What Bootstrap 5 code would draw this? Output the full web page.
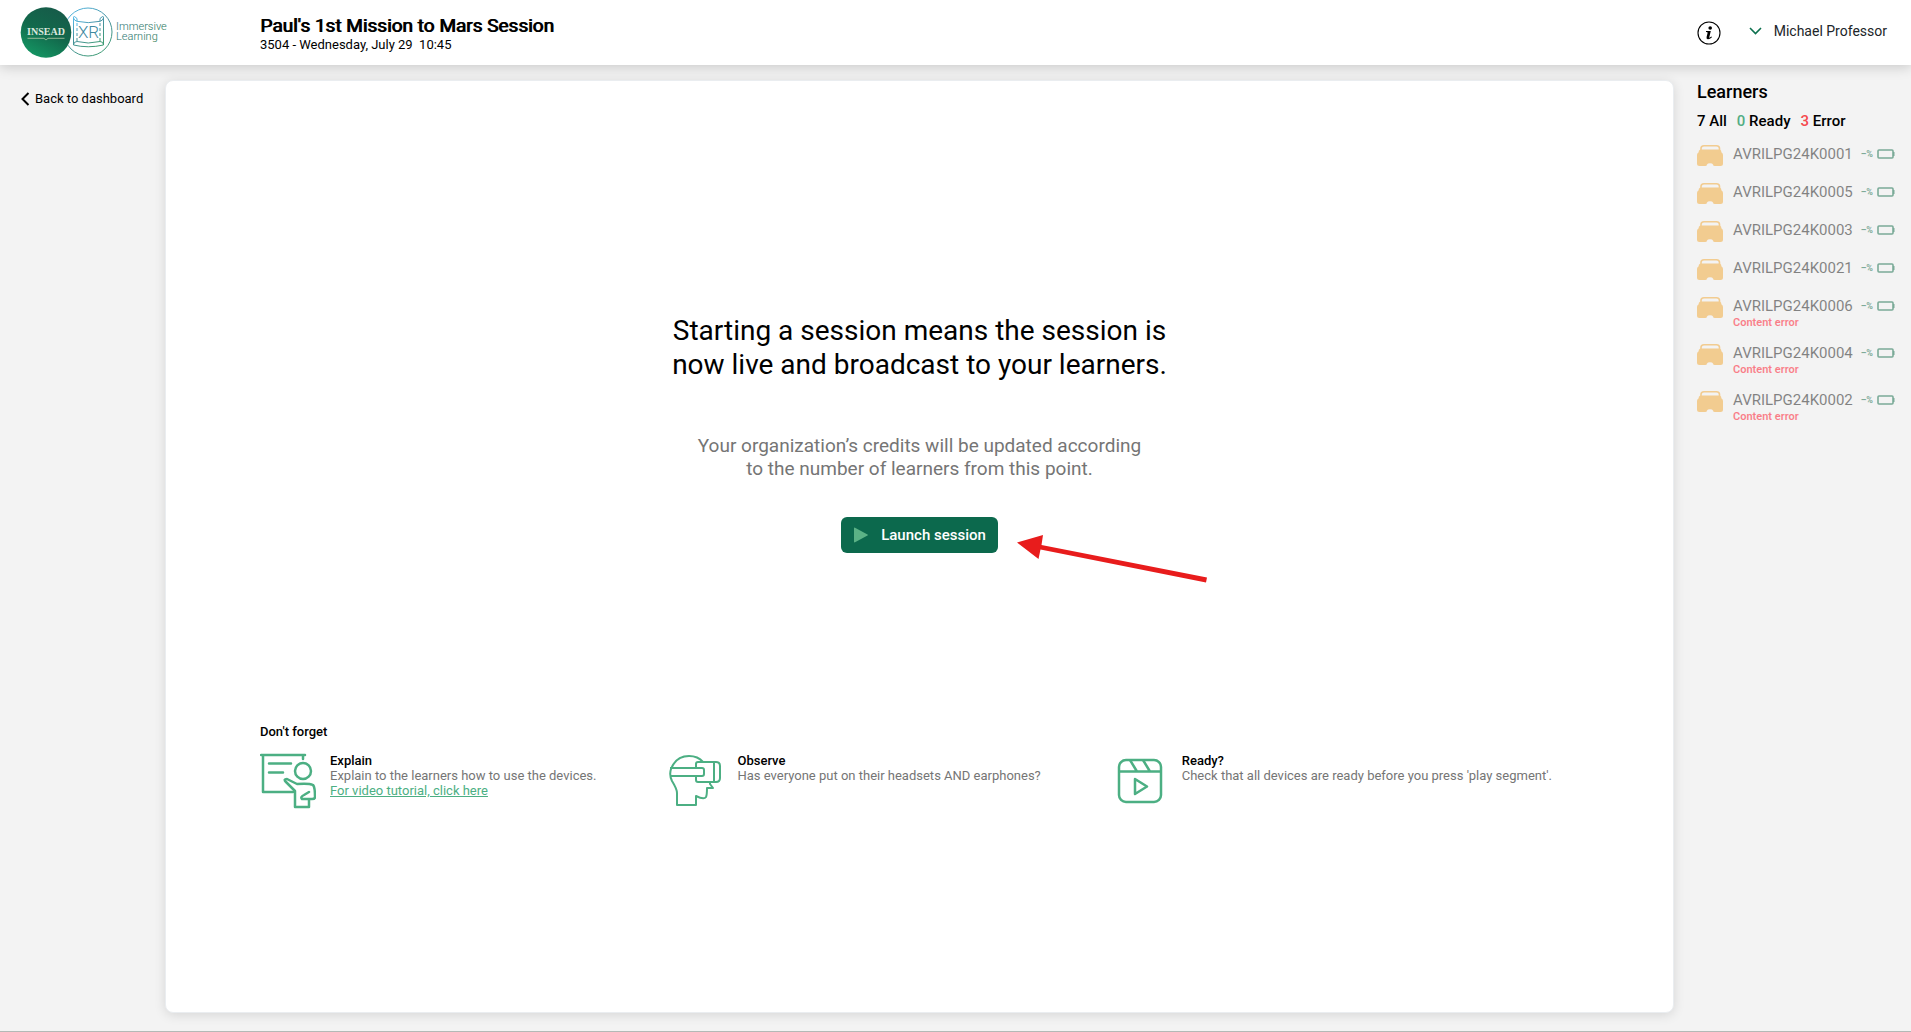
<!DOCTYPE html>
<html lang="en">
<head>
<meta charset="utf-8">
<meta name="viewport" content="width=device-width, initial-scale=1">
<title>Mission to Mars Session</title>
<link href="https://cdn.jsdelivr.net/npm/bootstrap@5.3.0/dist/css/bootstrap.min.css" rel="stylesheet">
<style>
body { font-family: Roboto, "Liberation Sans", sans-serif; background: #f3f3f3; color: #000; font-size: 13px; line-height: 15px; border-bottom: 1px solid #b3b9b6; }
a { color: inherit; }
.app-header { height: 65px; background: #fff; box-shadow: 0 2px 12px rgba(0,0,0,.18); }
.brand-area { width: 260px; padding: 7px 0 0 20px; }
.session-title { font-size: 19px; line-height: 20px; font-weight: 400; text-shadow: 1px 0 #000; padding-top: 16px; }
.session-meta { white-space: pre; padding-top: 1px; }
.user-area { padding: 21px 24px 0 0; gap: 28px; }
.user-menu { font-size: 14px; line-height: 20px; gap: 12px; }
.side-nav { width: 165px; padding: 26px 0 0 20px; }
.stage { margin: 15px 0 18px; border: 1px solid #eaedf0; border-radius: 8px; background: #fff; box-shadow: 0 2px 12px rgba(0,0,0,.12); padding: 233px 0 0; }
.learners { width: 237px; padding: 17px 16px 0 23px; }
.headline { font-size: 28px; line-height: 34px; font-weight: 400; }
.credits { font-size: 19px; line-height: 23px; color: #757575; padding-top: 52px; }
.launch { width: 157px; height: 36px; border-radius: 6px; background: #0c694d; color: #fff; font-size: 15px; font-weight: 500; gap: 12px; padding: 0; margin-top: 37px; }
.launch:hover { background: #095640; color: #fff; }
.pointer { left: 100%; top: 54px; margin-left: 18px; }
.tips { padding: 171px 0 0 94px; }
.tip-row { gap: 71px; padding-top: 14px; }
.tip-icon { width: 70px; }
.tip-name { font-size: 13px; line-height: 15px; font-weight: 500; }
.muted { color: #757575; }
.tutorial { color: #4caf83; }
.learners-title { font-size: 18px; line-height: 20px; font-weight: 500; }
.tally { font-size: 15px; line-height: 18px; font-weight: 500; gap: 10px; padding-top: 10px; }
.ready-count { color: #52ad84; }
.error-count { color: #f5494d; }
.roster { padding-top: 15px; gap: 16px; }
.device { opacity: .5; min-height: 22px; }
.device-icon { width: 36px; }
.device-name { font-size: 15px; line-height: 18px; color: #111; }
.device-error { font-size: 11px; line-height: 10px; font-weight: 600; color: #ff0a1e; padding-top: 3px; }
.power { color: #04643f; font-size: 9px; line-height: 18px; gap: 4px; font-weight: 700; white-space: nowrap; }
svg { display: block; flex: none; }
</style>
<script src="https://cdn.jsdelivr.net/npm/bootstrap@5.3.0/dist/js/bootstrap.bundle.min.js" defer></script>
</head>
<body class="min-vh-100 d-flex flex-column">
<svg width="0" height="0" class="position-absolute" aria-hidden="true">
  <symbol id="headset" viewBox="0 0 26 21"><path d="M4 6V3.500Q4 .8 7 .8H19.500Q22.500 .8 22.500 3.500V6" fill="none" stroke="#f2a630" stroke-width="1.600"/><path d="M3.500 4.500H22.500Q24.500 5 24.500 7.500Q26 8 26 10V18.500Q26 21 23.500 21H18Q16 21 16 19.500Q15.500 18.300 13 18.300Q10.500 18.300 10 19.500Q10 21 8 21H2.500Q0 21 0 18.500V10Q0 8 1.500 7.500Q1.500 5 3.500 4.500Z" fill="#f2a630"/></symbol>
  <symbol id="battery" viewBox="0 0 18 10"><rect x="1" y="1" width="15" height="8" rx="1" fill="none" stroke="currentColor" stroke-width="1.600"/><path d="M16 3h1.500v4h-1.500z" fill="currentColor"/></symbol>
</svg>

<header class="app-header d-flex position-relative">
  <a class="brand-area text-decoration-none" href="#" aria-label="INSEAD XR Immersive Learning">
    <svg width="150" height="52" viewBox="0 0 150 52">
      <defs>
        <linearGradient id="disc" x1=".75" y1="0" x2=".25" y2="1"><stop offset="0" stop-color="#175a49"/><stop offset=".5" stop-color="#12694c"/><stop offset="1" stop-color="#149864"/></linearGradient>
        <linearGradient id="ring" x1=".1" y1="0" x2=".7" y2="1"><stop offset="0" stop-color="#55b9e6"/><stop offset=".5" stop-color="#4791a0"/><stop offset="1" stop-color="#3e9b74"/></linearGradient>
        <linearGradient id="words" x1="0" y1="0" x2="1" y2="1"><stop offset="0" stop-color="#2b7482"/><stop offset="1" stop-color="#24774a"/></linearGradient>
      </defs>
      <circle cx="68" cy="25" r="24" fill="#fff" stroke="url(#ring)"/>
      <g fill="none" stroke="url(#ring)">
        <path d="M57 14.300V11.500L54.500 9.500Q53.500 9 53.500 11V38Q68 41.500 83.500 38V11Q83.500 9 82.500 9.500L80 11.500V14.300Q68 17 57 14.300Q54 13.500 53.500 11M80 14.300Q83 13.500 83.500 11M53.500 38Q53.500 34.500 57 34.500Q68 37.500 80 34.500Q83.500 34.500 83.500 38"/>
        <path d="M57 16V34M80 16V34" stroke-dasharray="3 2"/>
      </g>
      <text x="68.500" y="31" text-anchor="middle" font-family="Roboto" font-weight="300" font-size="17" fill="#4089a0">XR</text>
      <circle cx="26" cy="25.500" r="25.300" fill="url(#disc)"/>
      <text x="26" y="27.500" text-anchor="middle" font-family="Liberation Serif" font-weight="700" font-size="10" fill="#dde8df">INSEAD</text>
      <path d="M7.500 31.300H24L26 33L28 31.300H44.500" fill="none" stroke="#b8c9a8" stroke-width=".8"/>
      <text x="96" y="23" font-family="Roboto" font-weight="300" font-size="11" fill="url(#words)">Immersive</text>
      <text x="96" y="33" font-family="Roboto" font-weight="300" font-size="11" fill="url(#words)">Learning</text>
    </svg>
  </a>
  <div class="flex-grow-1">
    <h1 class="session-title m-0">Paul's 1st Mission to Mars Session</h1>
    <div class="session-meta">3504 - Wednesday, July 29  10:45</div>
  </div>
  <div class="user-area d-flex align-items-start">
    <button class="btn p-0 border-0" type="button" aria-label="Information">
      <svg width="24" height="24" viewBox="0 0 24 24"><circle cx="12" cy="12" r="11" fill="none" stroke="#000" stroke-width="1.100"/><circle cx="13.200" cy="7" r="1.800"/><path d="M9 10H13.800L12.200 16.500Q12.200 17.300 14.500 15.600L15 16.200Q12.500 18.600 10.700 18.300Q9 18 9.600 16L10.700 11.500Q10.500 11 9 11.100Z"/></svg>
    </button>
    <button class="btn user-menu d-flex align-items-center p-0 border-0" type="button">
      <svg width="13" height="8" viewBox="0 0 13 8"><path d="M1 1L6.500 6.500L12 1" fill="none" stroke="#0c704e" stroke-width="1.600"/></svg>
      Michael Professor
    </button>
  </div>
</header>

<div class="d-flex flex-grow-1">
  <nav class="side-nav">
    <a href="#" class="d-inline-flex align-items-center text-decoration-none gap-1">
      <svg width="11" height="14" viewBox="0 0 11 14"><path d="M8.500 1L2.500 7L8.500 13" fill="none" stroke="#000" stroke-width="2"/></svg>
      Back to dashboard
    </a>
  </nav>

  <main class="stage flex-grow-1">
    <section class="d-flex flex-column align-items-center text-center">
      <h2 class="headline m-0">Starting a session means the session is<br>now live and broadcast to your learners.</h2>
      <p class="credits m-0">Your organization’s credits will be updated according<br>to the number of learners from this point.</p>
      <div class="position-relative">
        <button class="btn launch d-flex align-items-center justify-content-center" type="button">
          <svg width="16" height="16" viewBox="0 0 16 16"><path d="M1 1.500Q1 0 2.500 1L14.500 7.500Q15.500 8 14.500 8.500L2.500 15Q1 16 1 14.500Z" fill="#5bb286"/></svg>
          Launch session
        </button>
        <svg class="pointer position-absolute" width="192" height="50" viewBox="0 0 192 50" aria-hidden="true"><path d="M1 8.500L27 1L25.500 11L191 43.500L190 48.500L24.500 15.500L22.500 25Z" fill="#e81c1c"/></svg>
      </div>
    </section>

    <section class="tips">
      <h3 class="tip-name m-0">Don't forget</h3>
      <div class="tip-row d-flex">
        <div class="d-flex">
          <div class="tip-icon">
            <svg width="56" height="56" viewBox="0 0 56 56" fill="none" stroke="#4caf83" stroke-width="2.500" stroke-linecap="round" stroke-linejoin="round"><path d="M1 2H45M3 2V39H33M43 2V6M9 10.500H31M9 19.500H23" /><circle cx="43" cy="18" r="8"/><path d="M35 54V38L26 29Q23 26 27 26L37 31Q49 30 53 32Q55 34 55 44Q55 46 52 46H42Q40 44 44 42L49 39M35 54H49V47"/></svg>
          </div>
          <div><h4 class="tip-name m-0">Explain</h4><div class="muted">Explain to the learners how to use the devices.</div><a class="tutorial" href="#">For video tutorial, click here</a></div>
        </div>
        <div class="d-flex">
          <div class="tip-icon">
            <svg width="57" height="56" viewBox="-2 0 57 56" fill="none" stroke="#4caf83" stroke-width="2" stroke-linejoin="round"><path d="M2 16Q7 3 20 3Q29 3 34 9M2 16Q0 22 3 28Q8 36 8 40V52H27V43Q35 47 37 44Q38 42 38 35H44L41 31V29"/><path d="M1 15H33Q35 15 35 17V21Q35 23 33 23H1"/><path d="M27 15V11Q27 9 29 9H47Q51 9 51 13V25Q51 29 47 29H29Q27 29 27 27V23M45 9V29"/></svg>
          </div>
          <div><h4 class="tip-name m-0">Observe</h4><div class="muted">Has everyone put on their headsets AND earphones?</div></div>
        </div>
        <div class="d-flex">
          <div class="tip-icon">
            <svg width="54" height="56" viewBox="0 -1 54 56" fill="none" stroke="#4caf83" stroke-width="2.500" stroke-linejoin="round"><rect x="7" y="6" width="42" height="42" rx="7"/><path d="M7 17.500H49M18 6L25 17.500M31 6L38 17.500M23 25L35 32.500L23 40Z"/></svg>
          </div>
          <div><h4 class="tip-name m-0">Ready?</h4><div class="muted">Check that all devices are ready before you press 'play segment'.</div></div>
        </div>
      </div>
    </section>
  </main>

  <aside class="learners">
    <h2 class="learners-title m-0">Learners</h2>
    <div class="tally d-flex"><span>7 All</span><span><span class="ready-count">0</span> Ready</span><span><span class="error-count">3</span> Error</span></div>
    <ul class="roster list-unstyled d-flex flex-column m-0">
      <li class="device d-flex"><div class="device-icon"><svg width="26" height="21"><use href="#headset"/></svg></div><div class="device-name flex-grow-1">AVRILPG24K0001</div><div class="power d-flex align-items-center align-self-start">–%<svg width="18" height="10"><use href="#battery"/></svg></div></li>
      <li class="device d-flex"><div class="device-icon"><svg width="26" height="21"><use href="#headset"/></svg></div><div class="device-name flex-grow-1">AVRILPG24K0005</div><div class="power d-flex align-items-center align-self-start">–%<svg width="18" height="10"><use href="#battery"/></svg></div></li>
      <li class="device d-flex"><div class="device-icon"><svg width="26" height="21"><use href="#headset"/></svg></div><div class="device-name flex-grow-1">AVRILPG24K0003</div><div class="power d-flex align-items-center align-self-start">–%<svg width="18" height="10"><use href="#battery"/></svg></div></li>
      <li class="device d-flex"><div class="device-icon"><svg width="26" height="21"><use href="#headset"/></svg></div><div class="device-name flex-grow-1">AVRILPG24K0021</div><div class="power d-flex align-items-center align-self-start">–%<svg width="18" height="10"><use href="#battery"/></svg></div></li>
      <li class="device d-flex"><div class="device-icon"><svg width="26" height="21"><use href="#headset"/></svg></div><div class="flex-grow-1"><div class="device-name">AVRILPG24K0006</div><div class="device-error">Content error</div></div><div class="power d-flex align-items-center align-self-start">–%<svg width="18" height="10"><use href="#battery"/></svg></div></li>
      <li class="device d-flex"><div class="device-icon"><svg width="26" height="21"><use href="#headset"/></svg></div><div class="flex-grow-1"><div class="device-name">AVRILPG24K0004</div><div class="device-error">Content error</div></div><div class="power d-flex align-items-center align-self-start">–%<svg width="18" height="10"><use href="#battery"/></svg></div></li>
      <li class="device d-flex"><div class="device-icon"><svg width="26" height="21"><use href="#headset"/></svg></div><div class="flex-grow-1"><div class="device-name">AVRILPG24K0002</div><div class="device-error">Content error</div></div><div class="power d-flex align-items-center align-self-start">–%<svg width="18" height="10"><use href="#battery"/></svg></div></li>
    </ul>
  </aside>
</div>
</body>
</html>
